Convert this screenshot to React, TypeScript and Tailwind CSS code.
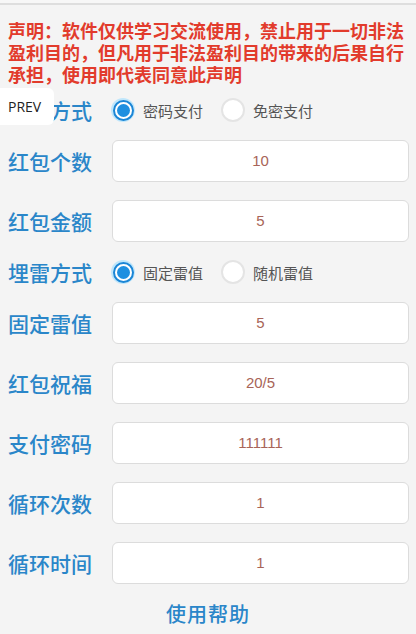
import { useState } from "react";

const font = { fontFamily: '"Noto Sans CJK SC", "Noto Sans", sans-serif' };
const numFont = { fontFamily: '"Liberation Sans", "Noto Sans CJK SC", sans-serif' };

const Radio = ({ checked, label, onClick }: { checked: boolean; label: string; onClick: () => void }) => (
  <button type="button" onClick={onClick} className="flex items-center gap-2 h-6">
    {checked ? (
      <span className="w-6 h-6 rounded-full bg-[#bfe6fb] flex items-center justify-center">
        <span className="w-[21px] h-[21px] rounded-full border-2 border-[#1b86d6] bg-white flex items-center justify-center">
          <span className="w-[13px] h-[13px] rounded-full bg-[#1e8fe0]" />
        </span>
      </span>
    ) : (
      <span className="w-6 h-6 rounded-full border-2 border-[#e4e4e4] bg-white" />
    )}
    <span className="text-[15px] text-[#555] leading-none">{label}</span>
  </button>
);

const Field = ({ label, value }: { label: string; value: string }) => (
  <div className="flex items-center h-[42px]">
    <div className="w-[112px] shrink-0 pl-2 text-[21px] font-medium text-[#2a86c9] leading-none">{label}</div>
    <div
      className="flex-1 mr-[7px] h-[42px] bg-white border border-[#dcdcdc] rounded-md flex items-center justify-center text-[15px] text-[#a86458]"
      style={numFont}
    >
      {value}
    </div>
  </div>
);

const App = () => {
  const [pay, setPay] = useState<"pwd" | "free">("pwd");
  const [mine, setMine] = useState<"fixed" | "random">("fixed");

  return (
    <div className="w-[416px] h-[634px] bg-[#f4f4f4] overflow-hidden relative" style={font}>
      <div className="h-[3px] bg-[#f7f7f7]" />
      <div className="h-[2px] bg-[#dedede]" />

      {/* 声明 */}
      <p className="px-2 pt-[14px] text-[18px] leading-[22px] font-bold text-[#e23b2c]">
        声明：软件仅供学习交流使用，禁止用于一切非法盈利目的，但凡用于非法盈利目的带来的后果自行承担，使用即代表同意此声明
      </p>

      <div className="flex flex-col gap-[18px] mt-[13px]">
        <div className="flex items-center h-6">
          <div className="w-[111px] shrink-0 pl-2 text-[21px] font-medium text-[#2a86c9] leading-none">支付方式</div>
          <div className="flex items-center gap-[18px]">
            <Radio checked={pay === "pwd"} label="密码支付" onClick={() => setPay("pwd")} />
            <Radio checked={pay === "free"} label="免密支付" onClick={() => setPay("free")} />
          </div>
        </div>
        <Field label="红包个数" value="10" />
        <Field label="红包金额" value="5" />
        <div className="flex items-center h-6">
          <div className="w-[111px] shrink-0 pl-2 text-[21px] font-medium text-[#2a86c9] leading-none">埋雷方式</div>
          <div className="flex items-center gap-[18px]">
            <Radio checked={mine === "fixed"} label="固定雷值" onClick={() => setMine("fixed")} />
            <Radio checked={mine === "random"} label="随机雷值" onClick={() => setMine("random")} />
          </div>
        </div>
        <Field label="固定雷值" value="5" />
        <Field label="红包祝福" value="20/5" />
        <Field label="支付密码" value="111111" />
        <Field label="循环次数" value="1" />
        <Field label="循环时间" value="1" />
      </div>

      <div className="mt-[15px] text-center text-[20px] font-medium text-[#2a86c9] tracking-[1px]">使用帮助</div>

      {/* PREV overlay */}
      <div
        className="absolute left-0 top-[88px] w-[54px] h-[37px] bg-white rounded-r-md flex items-center pl-[8px] text-[14px] text-[#222]"
        style={{ fontFamily: '"Open Sans", sans-serif' }}
      >
        PREV
      </div>
    </div>
  );
};

export default App;
